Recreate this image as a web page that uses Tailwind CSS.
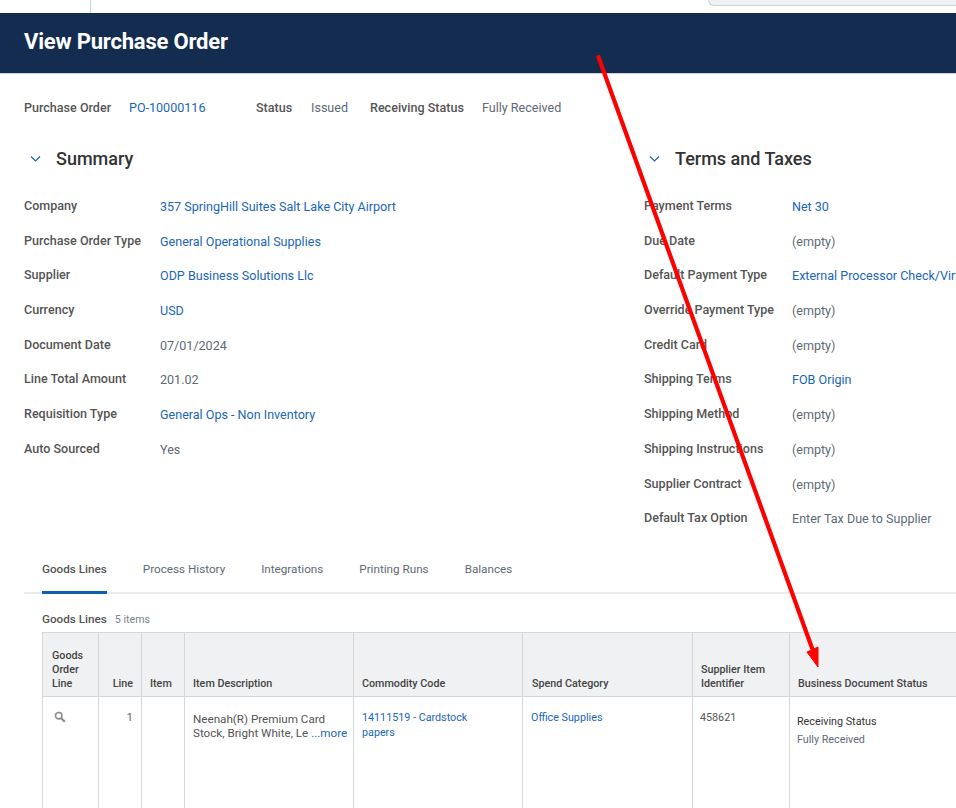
<!DOCTYPE html>
<html lang="en">
<head>
    <meta charset="UTF-8">
    <meta name="viewport" content="width=device-width, initial-scale=1.0">
    <script src="https://cdn.jsdelivr.net/npm/@tailwindcss/browser@4"></script>
    <title>View Purchase Order</title>
</head>
<body class="relative h-[808px] w-[956px] overflow-hidden bg-white font-['Roboto',sans-serif] text-[12.55px] text-[#5e6a75]">

    <!-- top strip -->
    <div class="relative flex h-[13px] justify-end">
        <div class="absolute left-[90px] top-0 h-[13px] w-px bg-[#c5d3df]"></div>
        <div class="h-[6px] w-[248px] rounded-bl-[12px] border-b border-l border-[#ced3d9] bg-[#f0f1f2]"></div>
    </div>

    <!-- banner -->
    <header class="flex h-[60px] items-center bg-[#132c50] pb-[4px] pl-6">
        <h1 class="text-[22px] font-bold tracking-[-0.2px] text-white">View Purchase Order</h1>
    </header>
    <div class="h-px bg-[#c5d3df]"></div>

    <!-- meta row -->
    <div class="mt-[26px] flex h-[15px] items-center pl-6 leading-[15px]">
        <span class="w-[105px] font-medium text-[#555]">Purchase Order</span>
        <a class="w-[127px] text-[#1a66b8]">PO-10000116</a>
        <span class="w-[55px] font-medium text-[#555]">Status</span>
        <span class="w-[59px]">Issued</span>
        <span class="w-[112px] font-medium text-[#555]">Receiving Status</span>
        <span>Fully Received</span>
    </div>

    <!-- summary + terms -->
    <div class="mt-[32px] flex h-[403px]">
        <section class="w-[644px] pl-6">
            <div class="flex h-[22px] items-center">
                <svg class="ml-[6px] mr-[15px] h-[11px] w-[11px] text-[#1a66b8]" viewBox="0 0 11 11" fill="none" stroke="currentColor" stroke-width="1.2"><path d="M1 3.5 5.5 8 10 3.5"/></svg>
                <h2 class="text-[18px] font-medium text-[#333]">Summary</h2>
            </div>
            <dl class="mt-[28px] grid grid-cols-[136px_1fr] auto-rows-[34.7px]">
                <dt class="font-medium text-[#555]">Company</dt><dd class="pt-px text-[#1a66b8]">357 SpringHill Suites Salt Lake City Airport</dd>
                <dt class="font-medium text-[#555]">Purchase Order Type</dt><dd class="pt-px text-[#1a66b8]">General Operational Supplies</dd>
                <dt class="font-medium text-[#555]">Supplier</dt><dd class="pt-px text-[#1a66b8]">ODP Business Solutions Llc</dd>
                <dt class="font-medium text-[#555]">Currency</dt><dd class="pt-px text-[#1a66b8]">USD</dd>
                <dt class="font-medium text-[#555]">Document Date</dt><dd class="pt-px">07/01/2024</dd>
                <dt class="font-medium text-[#555]">Line Total Amount</dt><dd class="pt-px">201.02</dd>
                <dt class="font-medium text-[#555]">Requisition Type</dt><dd class="pt-px text-[#1a66b8]">General Ops - Non Inventory</dd>
                <dt class="font-medium text-[#555]">Auto Sourced</dt><dd class="pt-px">Yes</dd>
            </dl>
        </section>
        <section class="flex-1 overflow-hidden">
            <div class="flex h-[22px] items-center">
                <svg class="ml-[5px] mr-[15px] h-[11px] w-[11px] text-[#1a66b8]" viewBox="0 0 11 11" fill="none" stroke="currentColor" stroke-width="1.2"><path d="M1 3.5 5.5 8 10 3.5"/></svg>
                <h2 class="text-[18px] font-medium text-[#333]">Terms and Taxes</h2>
            </div>
            <dl class="mt-[28px] grid grid-cols-[148px_1fr] auto-rows-[34.7px] whitespace-nowrap">
                <dt class="font-medium text-[#555]">Payment Terms</dt><dd class="pt-px text-[#1a66b8]">Net 30</dd>
                <dt class="font-medium text-[#555]">Due Date</dt><dd class="pt-px">(empty)</dd>
                <dt class="font-medium text-[#555]">Default Payment Type</dt><dd class="pt-px text-[#1a66b8]">External Processor Check/Virtual Card</dd>
                <dt class="font-medium text-[#555]">Override Payment Type</dt><dd class="pt-px">(empty)</dd>
                <dt class="font-medium text-[#555]">Credit Card</dt><dd class="pt-px">(empty)</dd>
                <dt class="font-medium text-[#555]">Shipping Terms</dt><dd class="pt-px text-[#1a66b8]">FOB Origin</dd>
                <dt class="font-medium text-[#555]">Shipping Method</dt><dd class="pt-px">(empty)</dd>
                <dt class="font-medium text-[#555]">Shipping Instructions</dt><dd class="pt-px">(empty)</dd>
                <dt class="font-medium text-[#555]">Supplier Contract</dt><dd class="pt-px">(empty)</dd>
                <dt class="font-medium text-[#555]">Default Tax Option</dt><dd class="pt-px">Enter Tax Due to Supplier</dd>
            </dl>
        </section>
    </div>

    <!-- tabs -->
    <nav class="ml-6 flex h-[44px] gap-9 border-b-2 border-[#e8ebed] pl-[18px] text-[11.7px]">
        <a class="-mb-[2px] h-[44px] border-b-[3px] border-[#0f5eb5] pt-[11px] font-medium text-[#555]">Goods Lines</a>
        <a class="pt-[11px]">Process History</a>
        <a class="pt-[11px]">Integrations</a>
        <a class="pt-[11px]">Printing Runs</a>
        <a class="pt-[11px]">Balances</a>
    </nav>

    <!-- goods lines grid -->
    <div class="ml-[42px] mt-[18px] flex h-[14px] items-baseline gap-2 text-[11.7px] leading-[14px]">
        <span class="font-medium text-[#555]">Goods Lines</span>
        <span class="text-[10.7px] text-[#7b858f]">5 items</span>
    </div>
    <table class="ml-[42px] mt-[6px] w-[960px] table-fixed border-collapse text-[10.75px] leading-[14px]">
        <colgroup>
            <col class="w-[56px]"><col class="w-[43px]"><col class="w-[43px]"><col class="w-[169px]"><col class="w-[169px]"><col class="w-[170px]"><col class="w-[97px]"><col class="w-[213px]">
        </colgroup>
        <thead class="bg-[#f0f1f2] text-[#444]">
            <tr class="h-[64px] align-bottom">
                <th class="border border-[#d5d7d9] px-[9px] pb-[5px] text-left font-medium">Goods Order Line</th>
                <th class="border border-[#d5d7d9] px-[8px] pb-[5px] text-right font-medium">Line</th>
                <th class="border border-[#d5d7d9] px-[8px] pb-[5px] text-left font-medium">Item</th>
                <th class="border border-[#d5d7d9] px-[8px] pb-[5px] text-left font-medium">Item Description</th>
                <th class="border border-[#d5d7d9] px-[8px] pb-[5px] text-left font-medium">Commodity Code</th>
                <th class="border border-[#d5d7d9] px-[9px] pb-[5px] text-left font-medium">Spend Category</th>
                <th class="border border-[#d5d7d9] px-[8px] pb-[5px] text-left font-medium">Supplier Item Identifier</th>
                <th class="border border-[#d5d7d9] px-[8px] pb-[5px] text-left font-medium">Business Document Status</th>
            </tr>
        </thead>
        <tbody>
            <tr class="h-[130px] align-top">
                <td class="border border-[#d5d7d9] pl-[11px] pt-[14px]">
                    <svg class="h-[12px] w-[12px] text-[#8c8c8c]" viewBox="0 0 12 12" fill="none" stroke="currentColor"><circle cx="4.7" cy="4.7" r="3.2" stroke-width="1.6"/><path d="m7.2 7.2 3.6 3.6" stroke-width="2.2"/></svg>
                </td>
                <td class="border border-[#d5d7d9] px-[8px] pt-[13px] text-right text-[11.7px] text-[#666]">1</td>
                <td class="border border-[#d5d7d9]"></td>
                <td class="border border-[#d5d7d9] pl-[8px] pt-[15px] text-[11.65px] text-[#555]">Neenah(R) Premium Card Stock, Bright White, Le <span class="text-[#1a66b8]">...more</span></td>
                <td class="border border-[#d5d7d9] pl-[8px] pr-10 pt-[14px] leading-[14.5px] text-[#1a66b8]">14111519 - Cardstock papers</td>
                <td class="border border-[#d5d7d9] pl-[8px] pt-[14px] text-[#1a66b8]">Office Supplies</td>
                <td class="border border-[#d5d7d9] pl-[7px] pt-[14px] text-[#555]">458621</td>
                <td class="border border-[#d5d7d9] pl-[7px] pt-[18px] text-[#333]">
                    <div>Receiving Status</div>
                    <div class="mt-1 text-[#5e6a75]">Fully Received</div>
                </td>
            </tr>
        </tbody>
    </table>

    <!-- red annotation arrow -->
    <svg class="pointer-events-none absolute left-0 top-0" width="956" height="808" viewBox="0 0 956 808">
        <path d="M598.5 57 812 648" stroke="#ff0000" stroke-width="4.2" stroke-linecap="round"/>
        <path d="M807 652 818 647 818 667Z" fill="#ff0000" stroke="#ff0000"/>
    </svg>
</body>
</html>
